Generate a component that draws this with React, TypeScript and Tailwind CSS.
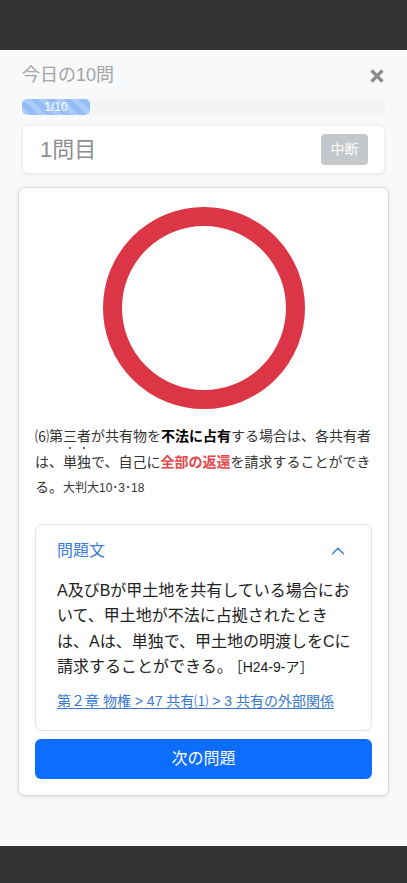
import { ChevronUp } from "lucide-react";

const font = "font-['Liberation_Sans','Noto_Sans_CJK_JP',sans-serif]";

const CloseIcon = () => (
  <svg width="16" height="16" viewBox="0 0 16 16" className="text-[#8c8c8c]">
    <path d="M2.5 2.5 L13.5 13.5 M13.5 2.5 L2.5 13.5" stroke="currentColor" strokeWidth="3.2" />
  </svg>
);

const Header = () => (
  <div className="flex items-center justify-between pt-[12px]">
    <h1 className="text-[18px] leading-[27px] text-[#a3a3a3]">今日の10問</h1>
    <CloseIcon />
  </div>
);

const Progress = () => (
  <div className="mt-[10px] h-[16px] w-full rounded-[5px] bg-[#f3f4f6] overflow-hidden">
    <div className="h-full w-[68px] rounded-[5px] bg-[#94bcf9] bg-[linear-gradient(45deg,rgba(255,255,255,.22)_25%,transparent_25%,transparent_50%,rgba(255,255,255,.22)_50%,rgba(255,255,255,.22)_75%,transparent_75%,transparent)] bg-[length:16px_16px] flex items-center justify-center text-[12px] leading-none text-white">
      1/10
    </div>
  </div>
);

const QuestionBar = () => (
  <div className="mt-[10px] h-[49px] bg-white rounded-[6px] shadow-[0_1px_3px_rgba(0,0,0,0.08)] border border-[#f0f0f0] flex items-center justify-between pl-[17px] pr-[16px]">
    <span className="text-[22px] text-[#8e8e8e]">1問目</span>
    <button className="w-[47px] h-[31px] rounded-[4px] bg-[#c5c8cb] text-white text-[14px]">中断</button>
  </div>
);

const Circle = () => (
  <svg width="202" height="202" viewBox="0 0 202 202" className="mx-auto">
    <circle cx="101" cy="101" r="91.5" fill="none" stroke="#dc3545" strokeWidth="19" />
  </svg>
);

// 傍点: dots sit above each character without growing the line box
const Dotted = ({ text }: { text: string }) => (
  <span className="relative inline-block">
    {text}
    <span className="absolute left-0 right-0 -top-[3px] flex justify-around pointer-events-none">
      {text.split("").map((_, i) => (
        <span key={i} className="block w-[2px] h-[2px] rounded-full bg-[#333]" />
      ))}
    </span>
  </span>
);

const Explanation = () => (
  <p className="mt-[15px] text-[14px] leading-[25.5px] text-[#333]">
    ⑹第三者が共有物を<b className="font-bold text-black">不法に占有</b>する場合は、各共有者は、
    <Dotted text="単独" />
    で、自己に<b className="font-bold text-[#e5484d]">全部の返還</b>を請求することができる。
    <span className="text-[12px]">大判大10･3･18</span>
  </p>
);

const ProblemBox = () => (
  <div className="mt-[22px] border border-[#e3e3e3] rounded-[7px] bg-white">
    <div className="flex items-center justify-between pl-[21px] pr-[22px] pt-[14px]">
      <span className="text-[16px] leading-[24px] text-[#3d7dd6]">問題文</span>
      <ChevronUp size={22} strokeWidth={1.6} className="text-[#3d7dd6]" />
    </div>
    <div className="pl-[21px] pr-[14px] pt-[15px] pb-[18px]">
      <p className="text-[16px] leading-[25.5px] text-[#222]">
        A及びBが甲土地を共有している場合において、甲土地が不法に占拠されたときは、Aは、単独で、甲土地の明渡しをCに請求することができる。
        <span className="ml-[3px] text-[14px]">［H24-9-ア］</span>
      </p>
      <a href="#" className="block mt-[10px] text-[14px] leading-[21px] text-[#3a78d2] underline underline-offset-2">
        第２章 物権 &gt; 47 共有⑴ &gt; 3 共有の外部関係
      </a>
    </div>
  </div>
);

export default function App() {
  return (
    <div className={`${font} h-[883px] flex flex-col bg-[#f8f9fa]`}>
      <div className="h-[50px] bg-[#333333]" />
      <main className="flex-1 px-[22px]">
        <Header />
        <Progress />
        <QuestionBar />
        <section className="mt-[13px] -mx-[4px] bg-white border border-[#d9d9d9] rounded-[7px] shadow-[0_1px_4px_rgba(0,0,0,0.1)] px-[16px] pt-[19px] pb-[16px]">
          <Circle />
          <Explanation />
          <ProblemBox />
          <button className="mt-[8px] w-full h-[40px] rounded-[6px] bg-[#0d6efd] text-white text-[16px]">次の問題</button>
        </section>
      </main>
      <div className="h-[37px] bg-[#333333]" />
    </div>
  );
}
